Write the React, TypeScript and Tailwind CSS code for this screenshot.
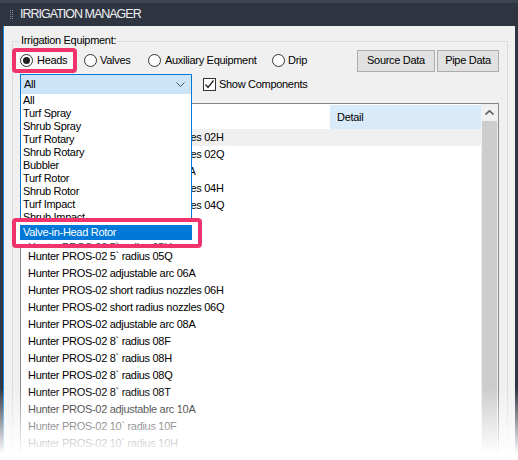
import React from 'react'

const rows = [
  'Hunter PROS-02 short radius nozzles 02H',
  'Hunter PROS-02 short radius nozzles 02Q',
  'Hunter PROS-02 adjustable arc 04A',
  'Hunter PROS-02 short radius nozzles 04H',
  'Hunter PROS-02 short radius nozzles 04Q',
  'Hunter PROS-02 adjustable arc 05A',
  'Hunter PROS-02 5` radius 05H',
  'Hunter PROS-02 5` radius 05Q',
  'Hunter PROS-02 adjustable arc 06A',
  'Hunter PROS-02 short radius nozzles 06H',
  'Hunter PROS-02 short radius nozzles 06Q',
  'Hunter PROS-02 adjustable arc 08A',
  'Hunter PROS-02 8` radius 08F',
  'Hunter PROS-02 8` radius 08H',
  'Hunter PROS-02 8` radius 08Q',
  'Hunter PROS-02 8` radius 08T',
  'Hunter PROS-02 adjustable arc 10A',
  'Hunter PROS-02 10` radius 10F',
  'Hunter PROS-02 10` radius 10H',
  'Hunter PROS-02 10` radius 10Q',
]

const headTypes = [
  'All',
  'Turf Spray',
  'Shrub Spray',
  'Turf Rotary',
  'Shrub Rotary',
  'Bubbler',
  'Turf Rotor',
  'Shrub Rotor',
  'Turf Impact',
  'Shrub Impact',
]

function Radio({ checked }: { checked?: boolean }) {
  return (
    <span className="w-[13px] h-[13px] shrink-0 rounded-full border border-[#333] bg-white flex items-center justify-center">
      {checked && <span className="w-[7px] h-[7px] rounded-full bg-[#222]" />}
    </span>
  )
}

function Grip() {
  return (
    <svg width="4" height="10" viewBox="0 0 4 10" className="shrink-0">
      {[0, 2, 4, 6, 8].map((y) => (
        <g key={y} fill="#8a909b">
          <rect x="0" y={y} width="1" height="1" />
          <rect x="2" y={y} width="1" height="1" />
        </g>
      ))}
    </svg>
  )
}

export default function App() {
  return (
    <div className="relative w-[518px] h-[460px] overflow-hidden bg-[#2f3542] flex flex-col font-['Liberation_Sans',Arial,sans-serif] text-[11px] tracking-[-0.3px] text-black">
      {/* Title bar */}
      <div className="h-[26px] shrink-0 flex items-center border-t-[3px] border-[#3c4351] bg-[#2e3440] pl-[10px]">
        <Grip />
        <span className="ml-[6px] text-[12.5px] tracking-[-1px] text-[#eef0f3]">IRRIGATION MANAGER</span>
      </div>

      <div className="flex-1 flex min-h-0">
        <div className="w-[3px] bg-[#2f3542]" />
        <div className="w-[1px] bg-[#1b86d8]" />

        <div className="flex-1 bg-[#f0f0f0] pt-[15px] pl-[8px] pr-[7px]">
          {/* Group box */}
          <div className="relative border border-[#dcdcdc] h-[520px] pt-[6px] pl-[7px] pr-[8px]">
            <span className="absolute -top-[8px] left-[7px] px-[1px] bg-[#f0f0f0] leading-[12px]">
              Irrigation Equipment:
            </span>

            {/* Radio row */}
            <div className="flex items-center h-[25px]">
              <div className="-ml-[8px] w-[65px] h-[25px] flex items-center gap-[4px] pl-[4px] border-4 border-[#f0336d] rounded-[4px] bg-[#f7f7f7]">
                <Radio checked />
                <span>Heads</span>
              </div>
              <div className="ml-[7px] w-[64px] flex items-center gap-[3px]">
                <Radio />
                <span>Valves</span>
              </div>
              <div className="w-[124px] flex items-center gap-[4px]">
                <Radio />
                <span>Auxiliary Equipment</span>
              </div>
              <div className="flex items-center gap-[3px]">
                <Radio />
                <span>Drip</span>
              </div>
              <div className="ml-auto flex gap-[2px]">
                <button className="w-[78px] h-[22px] bg-[#e1e1e1] border border-[#adadad]">Source Data</button>
                <button className="w-[62px] h-[22px] bg-[#e1e1e1] border border-[#adadad]">Pipe Data</button>
              </div>
            </div>

            {/* Filter row */}
            <div className="mt-[1px] flex items-center h-[21px]">
              <div className="relative w-[172px] h-[21px] border border-[#0078d7] bg-[#cce4f7] flex items-center pl-[3px]">
                <span>All</span>
                <svg width="9" height="5" viewBox="0 0 9 5" className="ml-auto mr-[6px]">
                  <polyline points="0.5,0.5 4.5,4.5 8.5,0.5" fill="none" stroke="#505050" strokeWidth="1" />
                </svg>
                {/* open dropdown */}
                <div className="absolute top-full -left-[1px] w-[172px] bg-white border border-t-0 border-[#0078d7] z-10">
                  {headTypes.map((t) => (
                    <div key={t} className="h-[13px] leading-[13px] pl-[2px] whitespace-nowrap">
                      {t}
                    </div>
                  ))}
                  <div className="h-[16px] leading-[16px] pl-[2px] bg-[#0078d7] text-white">Valve-in-Head Rotor</div>
                </div>
              </div>
              <span className="ml-[11px] w-[13px] h-[13px] border border-[#333] bg-white flex items-center justify-center">
                <svg width="11" height="11" viewBox="0 0 11 11">
                  <polyline points="1.5,5.5 4,8.5 9.5,1.5" fill="none" stroke="#222" strokeWidth="1.3" />
                </svg>
              </span>
              <span className="ml-[3px]">Show Components</span>
            </div>

            {/* List view */}
            <div className="mt-[8px] h-[420px] border border-[#828790] bg-white flex">
              <div className="flex-1 flex flex-col">
                <div className="h-[25px] flex">
                  <div className="flex-1" />
                  <div className="w-[151px] mt-[1px] bg-[#d9ebf9] pl-[7px] flex items-center">Detail</div>
                </div>
                {rows.map((r, i) => (
                  <div
                    key={r}
                    className={`h-[17px] shrink-0 pl-[7px] flex items-center whitespace-nowrap ${i === 0 ? 'bg-[#f0f0f0]' : ''}`}
                  >
                    {r}
                  </div>
                ))}
              </div>
              <div className="w-[17px] bg-[#f0f0f0] flex flex-col">
                <div className="h-[17px] flex items-center justify-center">
                  <svg width="9" height="5" viewBox="0 0 9 5">
                    <polyline points="0.5,4.5 4.5,0.8 8.5,4.5" fill="none" stroke="#606060" strokeWidth="1.6" />
                  </svg>
                </div>
                <div className="flex-1 mx-[1px] bg-[#cdcdcd]" />
              </div>
            </div>
          </div>
        </div>

        <div className="w-[3px] bg-[#2f3542]" />
      </div>

      {/* Highlight callout around selected head type */}
      <div className="absolute left-[12px] top-[218px] w-[190px] h-[30px] border-4 border-[#f0336d] rounded-[4px] bg-white overflow-hidden z-20">
        <div className="relative z-10 ml-[4px] mt-[3px] w-[172px] h-[15px] leading-[15px] pl-[3px] bg-[#0078d7] text-white">
          Valve-in-Head Rotor
        </div>
        <div className="-mt-[1px] h-[17px] leading-[17px] pl-[12px] whitespace-nowrap text-[#444]">
          Hunter PROS-02 5` radius 05H
        </div>
      </div>

      {/* Bottom fade */}
      <div className="absolute left-0 right-0 bottom-0 h-[72px] bg-linear-to-b from-white/0 to-white to-[92%] z-30" />
    </div>
  )
}
